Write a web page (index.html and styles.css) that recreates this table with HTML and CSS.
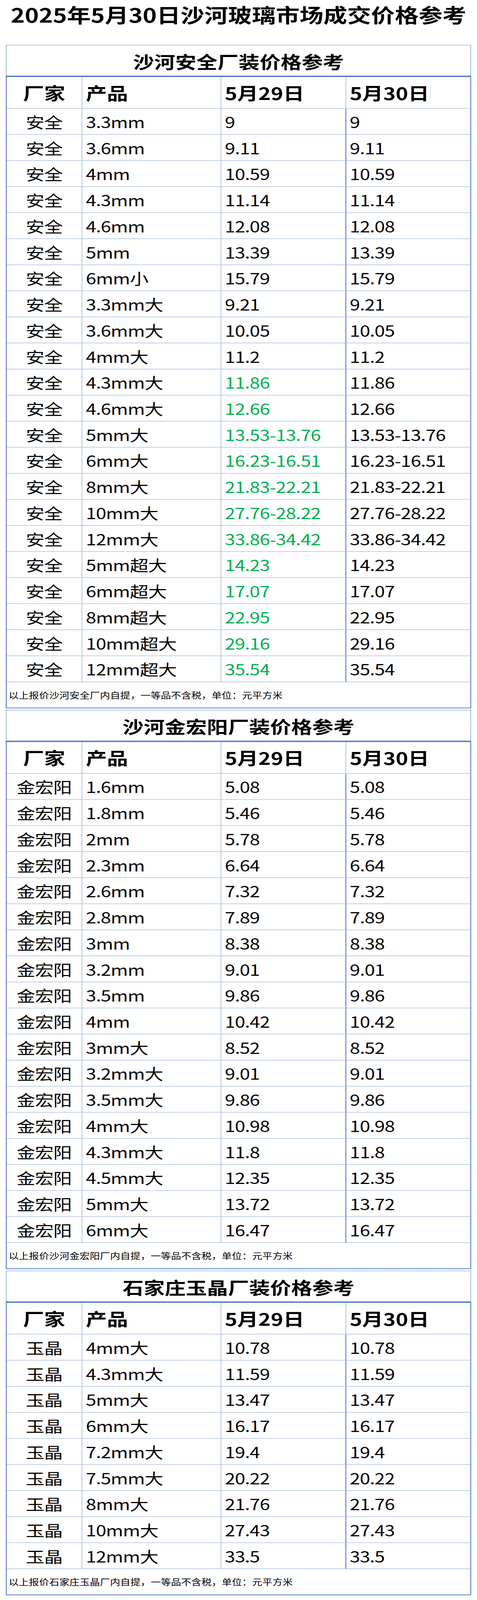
FILE: index.html
```html
<!DOCTYPE html>
<html lang="zh-CN">
<head>
<meta charset="utf-8">
<meta name="viewport" content="width=device-width, initial-scale=1">
<title>2025年5月30日沙河玻璃市场成交价格参考</title>
<link rel="stylesheet" href="styles.css">
</head>
<body>
<div class="frame">
<main class="page">
  <h1 class="page-title">2025年5月30日沙河玻璃市场成交价格参考</h1>

  <section class="sheet">
    <h2 class="sheet-title">沙河安全厂装价格参考</h2>
    <div class="grid">
      <div class="cell head c1">厂家</div><div class="cell head c2">产品</div><div class="cell head c3">5月29日</div><div class="cell head c4">5月30日<span class="caret"></span></div>
      <div class="cell c1">安全</div><div class="cell c2">3.3mm</div><div class="cell c3">9</div><div class="cell c4">9</div>
      <div class="cell c1">安全</div><div class="cell c2">3.6mm</div><div class="cell c3">9.11</div><div class="cell c4">9.11</div>
      <div class="cell c1">安全</div><div class="cell c2">4mm</div><div class="cell c3">10.59</div><div class="cell c4">10.59</div>
      <div class="cell c1">安全</div><div class="cell c2">4.3mm</div><div class="cell c3">11.14</div><div class="cell c4">11.14</div>
      <div class="cell c1">安全</div><div class="cell c2">4.6mm</div><div class="cell c3">12.08</div><div class="cell c4">12.08</div>
      <div class="cell c1">安全</div><div class="cell c2">5mm</div><div class="cell c3">13.39</div><div class="cell c4">13.39</div>
      <div class="cell c1">安全</div><div class="cell c2">6mm小</div><div class="cell c3">15.79</div><div class="cell c4">15.79</div>
      <div class="cell c1">安全</div><div class="cell c2">3.3mm大</div><div class="cell c3">9.21</div><div class="cell c4">9.21</div>
      <div class="cell c1">安全</div><div class="cell c2">3.6mm大</div><div class="cell c3">10.05</div><div class="cell c4">10.05</div>
      <div class="cell c1">安全</div><div class="cell c2">4mm大</div><div class="cell c3">11.2</div><div class="cell c4">11.2</div>
      <div class="cell c1">安全</div><div class="cell c2">4.3mm大</div><div class="cell c3 up">11.86</div><div class="cell c4">11.86</div>
      <div class="cell c1">安全</div><div class="cell c2">4.6mm大</div><div class="cell c3 up">12.66</div><div class="cell c4">12.66</div>
      <div class="cell c1">安全</div><div class="cell c2">5mm大</div><div class="cell c3 up">13.53-13.76</div><div class="cell c4">13.53-13.76</div>
      <div class="cell c1">安全</div><div class="cell c2">6mm大</div><div class="cell c3 up">16.23-16.51</div><div class="cell c4">16.23-16.51</div>
      <div class="cell c1">安全</div><div class="cell c2">8mm大</div><div class="cell c3 up">21.83-22.21</div><div class="cell c4">21.83-22.21</div>
      <div class="cell c1">安全</div><div class="cell c2">10mm大</div><div class="cell c3 up">27.76-28.22</div><div class="cell c4">27.76-28.22</div>
      <div class="cell c1">安全</div><div class="cell c2">12mm大</div><div class="cell c3 up">33.86-34.42</div><div class="cell c4">33.86-34.42</div>
      <div class="cell c1">安全</div><div class="cell c2">5mm超大</div><div class="cell c3 up">14.23</div><div class="cell c4">14.23</div>
      <div class="cell c1">安全</div><div class="cell c2">6mm超大</div><div class="cell c3 up">17.07</div><div class="cell c4">17.07</div>
      <div class="cell c1">安全</div><div class="cell c2">8mm超大</div><div class="cell c3 up">22.95</div><div class="cell c4">22.95</div>
      <div class="cell c1">安全</div><div class="cell c2">10mm超大</div><div class="cell c3 up">29.16</div><div class="cell c4">29.16</div>
      <div class="cell c1">安全</div><div class="cell c2">12mm超大</div><div class="cell c3 up">35.54</div><div class="cell c4">35.54</div>
      <p class="note">以上报价沙河安全厂内自提，一等品不含税，单位：元平方米</p>
    </div>
  </section>

  <section class="sheet">
    <h2 class="sheet-title">沙河金宏阳厂装价格参考</h2>
    <div class="grid">
      <div class="cell head c1">厂家</div><div class="cell head c2">产品</div><div class="cell head c3">5月29日</div><div class="cell head c4">5月30日</div>
      <div class="cell c1">金宏阳</div><div class="cell c2">1.6mm</div><div class="cell c3">5.08</div><div class="cell c4">5.08</div>
      <div class="cell c1">金宏阳</div><div class="cell c2">1.8mm</div><div class="cell c3">5.46</div><div class="cell c4">5.46</div>
      <div class="cell c1">金宏阳</div><div class="cell c2">2mm</div><div class="cell c3">5.78</div><div class="cell c4">5.78</div>
      <div class="cell c1">金宏阳</div><div class="cell c2">2.3mm</div><div class="cell c3">6.64</div><div class="cell c4">6.64</div>
      <div class="cell c1">金宏阳</div><div class="cell c2">2.6mm</div><div class="cell c3">7.32</div><div class="cell c4">7.32</div>
      <div class="cell c1">金宏阳</div><div class="cell c2">2.8mm</div><div class="cell c3">7.89</div><div class="cell c4">7.89</div>
      <div class="cell c1">金宏阳</div><div class="cell c2">3mm</div><div class="cell c3">8.38</div><div class="cell c4">8.38</div>
      <div class="cell c1">金宏阳</div><div class="cell c2">3.2mm</div><div class="cell c3">9.01</div><div class="cell c4">9.01</div>
      <div class="cell c1">金宏阳</div><div class="cell c2">3.5mm</div><div class="cell c3">9.86</div><div class="cell c4">9.86</div>
      <div class="cell c1">金宏阳</div><div class="cell c2">4mm</div><div class="cell c3">10.42</div><div class="cell c4">10.42</div>
      <div class="cell c1">金宏阳</div><div class="cell c2">3mm大</div><div class="cell c3">8.52</div><div class="cell c4">8.52</div>
      <div class="cell c1">金宏阳</div><div class="cell c2">3.2mm大</div><div class="cell c3">9.01</div><div class="cell c4">9.01</div>
      <div class="cell c1">金宏阳</div><div class="cell c2">3.5mm大</div><div class="cell c3">9.86</div><div class="cell c4">9.86</div>
      <div class="cell c1">金宏阳</div><div class="cell c2">4mm大</div><div class="cell c3">10.98</div><div class="cell c4">10.98</div>
      <div class="cell c1">金宏阳</div><div class="cell c2">4.3mm大</div><div class="cell c3">11.8</div><div class="cell c4">11.8</div>
      <div class="cell c1">金宏阳</div><div class="cell c2">4.5mm大</div><div class="cell c3">12.35</div><div class="cell c4">12.35</div>
      <div class="cell c1">金宏阳</div><div class="cell c2">5mm大</div><div class="cell c3">13.72</div><div class="cell c4">13.72</div>
      <div class="cell c1">金宏阳</div><div class="cell c2">6mm大</div><div class="cell c3">16.47</div><div class="cell c4">16.47</div>
      <p class="note">以上报价沙河金宏阳厂内自提，一等品不含税，单位：元平方米</p>
    </div>
  </section>

  <section class="sheet">
    <h2 class="sheet-title">石家庄玉晶厂装价格参考</h2>
    <div class="grid">
      <div class="cell head c1">厂家</div><div class="cell head c2">产品</div><div class="cell head c3">5月29日</div><div class="cell head c4">5月30日</div>
      <div class="cell c1">玉晶</div><div class="cell c2">4mm大</div><div class="cell c3">10.78</div><div class="cell c4">10.78</div>
      <div class="cell c1">玉晶</div><div class="cell c2">4.3mm大</div><div class="cell c3">11.59</div><div class="cell c4">11.59</div>
      <div class="cell c1">玉晶</div><div class="cell c2">5mm大</div><div class="cell c3">13.47</div><div class="cell c4">13.47</div>
      <div class="cell c1">玉晶</div><div class="cell c2">6mm大</div><div class="cell c3">16.17</div><div class="cell c4">16.17</div>
      <div class="cell c1">玉晶</div><div class="cell c2">7.2mm大</div><div class="cell c3">19.4</div><div class="cell c4">19.4</div>
      <div class="cell c1">玉晶</div><div class="cell c2">7.5mm大</div><div class="cell c3">20.22</div><div class="cell c4">20.22</div>
      <div class="cell c1">玉晶</div><div class="cell c2">8mm大</div><div class="cell c3">21.76</div><div class="cell c4">21.76</div>
      <div class="cell c1">玉晶</div><div class="cell c2">10mm大</div><div class="cell c3">27.43</div><div class="cell c4">27.43</div>
      <div class="cell c1">玉晶</div><div class="cell c2">12mm大</div><div class="cell c3">33.5</div><div class="cell c4">33.5</div>
      <p class="note">以上报价石家庄玉晶厂内自提，一等品不含税，单位：元平方米</p>
    </div>
  </section>
</main>
</div>
</body>
</html>
```

FILE: styles.css
```css
html, body {
  margin: 0;
  padding: 0;
  background: #ffffff;
}

body {
  font-family: "Noto Sans CJK SC", "Noto Sans", sans-serif;
  color: #000000;
}

.frame {
  height: 100vh;
  overflow: hidden;
}

.page {
  width: 1192px;
  margin-left: 15px;
  padding-bottom: 15px;
  transform-origin: 0 0;
  transform: scaleY(0.81380);
}

.page-title {
  margin: 0 0 51px 0;
  height: 90px;
  line-height: 90px;
  font-size: 61px;
  font-weight: 700;
  text-align: center;
  white-space: nowrap;
}

.sheet + .sheet {
  margin-top: 5px;
}

.sheet-title {
  margin: 0;
  box-sizing: border-box;
  height: 97px;
  border: 2px dotted #4472c4;
  border-bottom: none;
  display: flex;
  align-items: center;
  justify-content: center;
  font-size: 54px;
  font-weight: 700;
  line-height: 1;
  padding-top: 4px;
}

.grid {
  display: grid;
  grid-template-columns: 194px 356px 320px 318px;
  border-top: 4px solid #4472c4;
  border-left: 2px solid #4472c4;
  border-right: 2px solid #4472c4;
  border-bottom: 2px solid #4472c4;
}

.cell {
  box-sizing: border-box;
  height: 82px;
  border-bottom: 2px solid #b4c6e7;
  display: flex;
  align-items: center;
  padding-left: 9px;
  font-size: 48px;
  line-height: 1;
  letter-spacing: -1px;
  white-space: nowrap;
}

.cell.head {
  height: 100px;
  font-size: 54px;
  font-weight: 700;
  letter-spacing: 0;
}

.c1 {
  justify-content: center;
  padding-left: 0;
  border-right: 2px solid #b4c6e7;
}

.c2 {
  border-right: 2px solid #b4c6e7;
}

.c3 {
  border-right: 2px solid #4472c4;
}

.c3.head {
  border-right-color: #b4c6e7;
}

.up {
  color: #00b050;
}

.caret {
  display: inline-block;
  width: 1px;
  height: 48px;
  margin-left: 2px;
  background: #8fd6ff;
}

.note {
  grid-column: 1 / -1;
  box-sizing: border-box;
  height: 80px;
  margin: 0;
  display: flex;
  align-items: center;
  padding-left: 5px;
  font-size: 26px;
  line-height: 1;
  white-space: nowrap;
}
```
